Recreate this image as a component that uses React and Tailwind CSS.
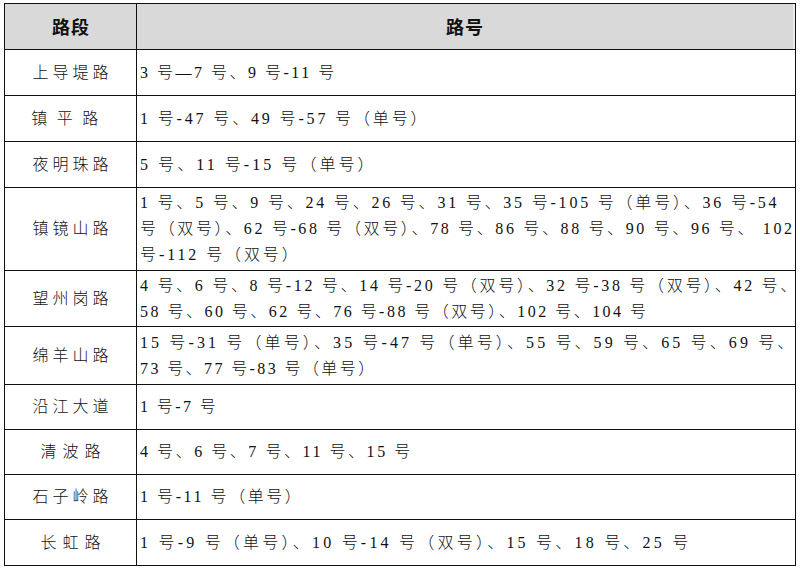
import React from "react";

const rows = [
  { name: "上导堤路", lt: "tracking-[4px] pl-[4px]", h: "h-[46px]", lines: [["3 号—7 号、9 号-11 号", "tracking-[2.5px]"]] },
  { name: "镇平路", lt: "tracking-[9.5px] pr-[2px]", h: "h-[46px]", lines: [["1 号-47 号、49 号-57 号（单号）", "tracking-[2.85px]"]] },
  { name: "夜明珠路", lt: "tracking-[4px] pl-[4px]", h: "h-[46px]", lines: [["5 号、11 号-15 号（单号）", "tracking-[3.05px]"]] },
  {
    name: "镇镜山路",
    lt: "tracking-[4px] pl-[4px]",
    h: "h-[83px]",
    lines: [
      ["1 号、5 号、9 号、24 号、26 号、31 号、35 号-105 号（单号）、36 号-54", "tracking-[2.79px]"],
      ["号（双号）、62 号-68 号（双号）、78 号、86 号、88 号、90 号、96 号、 102", "tracking-[2.64px]"],
      ["号-112 号（双号）", "tracking-[2.9px]"],
    ],
  },
  {
    name: "望州岗路",
    lt: "tracking-[4px] pl-[4px]",
    h: "h-[56px]",
    lines: [
      ["4 号、6 号、8 号-12 号、14 号-20 号（双号）、32 号-38 号（双号）、42 号、", "tracking-[2.7px]"],
      ["58 号、60 号、62 号、76 号-88 号（双号）、102 号、104 号", "tracking-[2.48px]"],
    ],
  },
  {
    name: "绵羊山路",
    lt: "tracking-[4px] pl-[4px]",
    h: "h-[58px]",
    lines: [
      ["15 号-31 号（单号）、35 号-47 号（单号）、55 号、59 号、65 号、69 号、", "tracking-[3.12px]"],
      ["73 号、77 号-83 号（单号）", "tracking-[2.4px]"],
    ],
  },
  { name: "沿江大道", lt: "tracking-[4px] pl-[4px]", h: "h-[45px]", lines: [["1 号-7 号", "tracking-[2.4px]"]] },
  { name: "清波路", lt: "tracking-[6px] pl-[6px]", h: "h-[45px]", lines: [["4 号、6 号、7 号、11 号、15 号", "tracking-[2.54px]"]] },
  { name: "石子岭路", lt: "tracking-[4px] pl-[4px]", h: "h-[45px]", lines: [["1 号-11 号（单号）", "tracking-[2.55px]"]] },
  {
    name: "长虹路",
    lt: "tracking-[6px] pl-[6px]",
    h: "h-[45px]",
    lines: [["1 号-9 号（单号）、10 号-14 号（双号）、15 号、18 号、25 号", "tracking-[3.22px]"]],
  },
];

const serif = { fontFamily: '"Liberation Serif", "Noto Sans CJK SC", serif' };
const sans = { fontFamily: '"Noto Sans CJK SC", sans-serif' };

export default function App() {
  return (
    <div className="w-[800px] h-[572px] bg-white pt-[3px] pl-[4px]">
      <div className="w-[792px] border border-[#111] text-[#111]">
        <div className="flex h-[46px] bg-[#d9d9d9] border-b border-[#111]">
          <div
            className="w-[132px] shrink-0 border-r border-[#111] flex items-center justify-center text-[18px] font-bold tracking-[1px] pl-[1px]"
            style={sans}
          >
            路段
          </div>
          <div
            className="flex-1 flex items-center justify-center text-[18px] font-bold tracking-[1px] border-r-2 border-[#ececec]"
            style={sans}
          >
            路号
          </div>
        </div>
        {rows.map((r, i) => (
          <div
            key={r.name}
            className={`flex ${r.h} ${i < rows.length - 1 ? "border-b border-[#111]" : ""}`}
          >
            <div
              className={`w-[132px] shrink-0 border-r border-[#111] flex items-center justify-center text-[16px] font-light ${r.lt}`}
              style={serif}
            >
              {r.name}
            </div>
            <div
              className="flex-1 min-w-0 flex flex-col justify-center pl-[3px] text-[16px] leading-[26px] whitespace-pre font-light"
              style={serif}
            >
              {r.lines.map(([l, t], j) => (
                <div key={j} className={t}>
                  {l}
                </div>
              ))}
            </div>
          </div>
        ))}
      </div>
    </div>
  );
}
